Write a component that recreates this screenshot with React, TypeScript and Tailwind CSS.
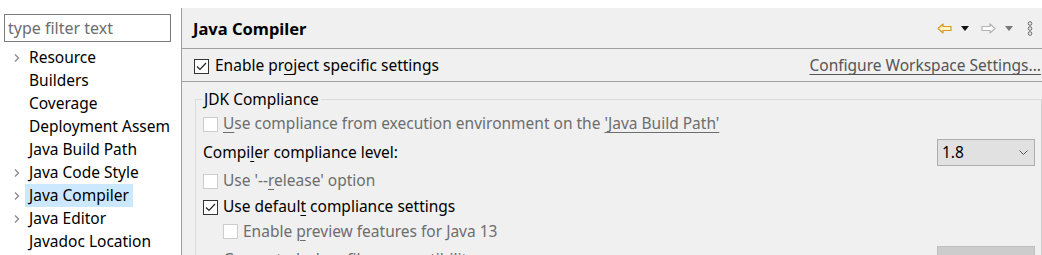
import React from "react"

const FONT = { fontFamily: '"Noto Sans", "Open Sans", sans-serif' }

type Item = { label: string; chevron?: boolean; selected?: boolean }

const TREE: Item[] = [
  { label: "Resource", chevron: true },
  { label: "Builders" },
  { label: "Coverage" },
  { label: "Deployment Assem" },
  { label: "Java Build Path" },
  { label: "Java Code Style", chevron: true },
  { label: "Java Compiler", chevron: true, selected: true },
  { label: "Java Editor", chevron: true },
  { label: "Javadoc Location" },
]

function Chevron() {
  return (
    <svg width="8" height="10" viewBox="0 0 8 10" className="shrink-0">
      <path d="M2 1.5 L5.5 5 L2 8.5" fill="none" stroke="#8c8c8c" strokeWidth="1.4" />
    </svg>
  )
}

function Check({ checked, disabled }: { checked?: boolean; disabled?: boolean }) {
  return (
    <span
      className={`inline-flex w-[15px] h-[15px] shrink-0 items-center justify-center bg-white border ${
        disabled ? "border-[#cccccc]" : "border-[#333333]"
      }`}
    >
      {checked && (
        <svg width="11" height="9" viewBox="0 0 11 9">
          <path d="M1 4.5 L4 7.5 L10 1" fill="none" stroke="#222" strokeWidth="1.2" />
        </svg>
      )}
    </span>
  )
}

function U({ children }: { children: React.ReactNode }) {
  return <span className="underline underline-offset-[3px]">{children}</span>
}

export default function App() {
  return (
    <div className="flex w-[1042px] h-[255px] overflow-hidden bg-white text-[15.5px] text-black" style={FONT}>
      {/* ── Left tree ── */}
      <aside className="w-[181px] shrink-0 bg-white pt-[14px]">
        <div className="ml-[4px] w-[167px] h-[28px] border border-[#7a7a7a] flex items-center pl-[3px] text-[#6d6d6d] text-[16px]">
          type filter text
        </div>
        <ul className="mt-[4px]">
          {TREE.map(item => (
            <li key={item.label} className="flex items-center h-[23px] pl-[13px]">
              <span className="w-[12px] flex">{item.chevron && <Chevron />}</span>
              <span className={`px-[4px] h-[23px] flex items-center whitespace-nowrap ${item.selected ? "bg-[#cce8ff]" : ""}`}>
                {item.label}
              </span>
            </li>
          ))}
        </ul>
      </aside>

      {/* ── Right page ── */}
      <main className="flex-1 mt-[8px] bg-[#f0f0f0] border-l border-[#a0a0a0] min-w-0">
        <header className="h-[41px] border-b border-[#a0a0a0] flex items-center justify-between pl-[11px] pr-[9px]">
          <h1 className="font-bold text-[16.5px] pt-[3px]">Java Compiler</h1>
          <div className="flex items-center gap-[9px] pt-[1px]">
            <svg width="15" height="11" viewBox="0 0 15 11" className="ml-[2px]">
              <path d="M1 5.5 L6 1 L6 3.5 L14 3.5 L14 7.5 L6 7.5 L6 10 Z" fill="#fff4c8" stroke="#d89a18" strokeWidth="1.2" strokeLinejoin="round" />
            </svg>
            <svg width="8" height="5" viewBox="0 0 8 5"><path d="M0 0 H8 L4 5 Z" fill="#111" /></svg>
            <svg width="15" height="11" viewBox="0 0 15 11" className="ml-[3px]">
              <path d="M14 5.5 L9 1 L9 3.5 L1 3.5 L1 7.5 L9 7.5 L9 10 Z" fill="#fafafa" stroke="#b4b4b4" strokeWidth="1.2" strokeLinejoin="round" />
            </svg>
            <svg width="8" height="5" viewBox="0 0 8 5"><path d="M0 0 H8 L4 5 Z" fill="#777" /></svg>
            <svg width="6" height="15" viewBox="0 0 6 15" className="ml-[5px]">
              <circle cx="3" cy="2.5" r="1.8" fill="none" stroke="#666" strokeWidth="1" />
              <circle cx="3" cy="7.5" r="1.8" fill="none" stroke="#666" strokeWidth="1" />
              <circle cx="3" cy="12.5" r="1.8" fill="none" stroke="#666" strokeWidth="1" />
            </svg>
          </div>
        </header>

        <div className="h-[33px] border-b border-[#a0a0a0] flex items-center justify-between pl-[12px] pr-[1px] pt-[2px]">
          <label className="flex items-center gap-[6px]">
            <Check checked />
            <span>
              Enable pr<U>o</U>ject specific settings
            </span>
          </label>
          <span className="underline underline-offset-[3px] text-[#555]">Configure Workspace Settings...</span>
        </div>

        <fieldset className="mt-[6px] ml-[13px] border border-[#dcdcdc] border-r-[#cfcfcf] pl-[7px] pr-[6px] pb-[20px]">
          <legend className="-ml-[1px] px-[2px] leading-[22px]">JDK Compliance</legend>

          <div className="h-[28px] flex items-center gap-[5px] text-[#6d6d6d]">
            <Check disabled />
            <span>
              <U>U</U>se compliance from execution environment on the <U>'Java Build Path'</U>
            </span>
          </div>

          <div className="h-[29px] flex items-center justify-between">
            <span>
              Compi<U>l</U>er compliance level:
            </span>
            <div className="w-[98px] h-[27px] bg-[#e1e1e1] border border-[#adadad] flex items-center justify-between pl-[4px] pr-[6px]">
              <span>1.8</span>
              <svg width="9" height="5" viewBox="0 0 9 5">
                <path d="M0.5 0.5 L4.5 4.5 L8.5 0.5" fill="none" stroke="#555" strokeWidth="1" />
              </svg>
            </div>
          </div>

          <div className="h-[28px] flex items-center gap-[5px] text-[#6d6d6d]">
            <Check disabled />
            <span>
              Use '--<U>r</U>elease' option
            </span>
          </div>

          <div className="h-[24px] flex items-center gap-[5px]">
            <Check checked />
            <span>
              Use defaul<U>t</U> compliance settings
            </span>
          </div>

          <div className="h-[25px] flex items-center gap-[5px] pl-[20px] text-[#6d6d6d]">
            <Check disabled />
            <span>
              Enable <U>p</U>review features for Java 13
            </span>
          </div>

          <div className="h-[27px] mt-[2px] flex items-center justify-between">
            <span className="pl-[20px] text-[#6d6d6d]">Generated .class files compatibility:</span>
            <div className="w-[98px] h-[27px] bg-[#cccccc] border border-[#bfbfbf]" />
          </div>
        </fieldset>
      </main>
    </div>
  )
}
